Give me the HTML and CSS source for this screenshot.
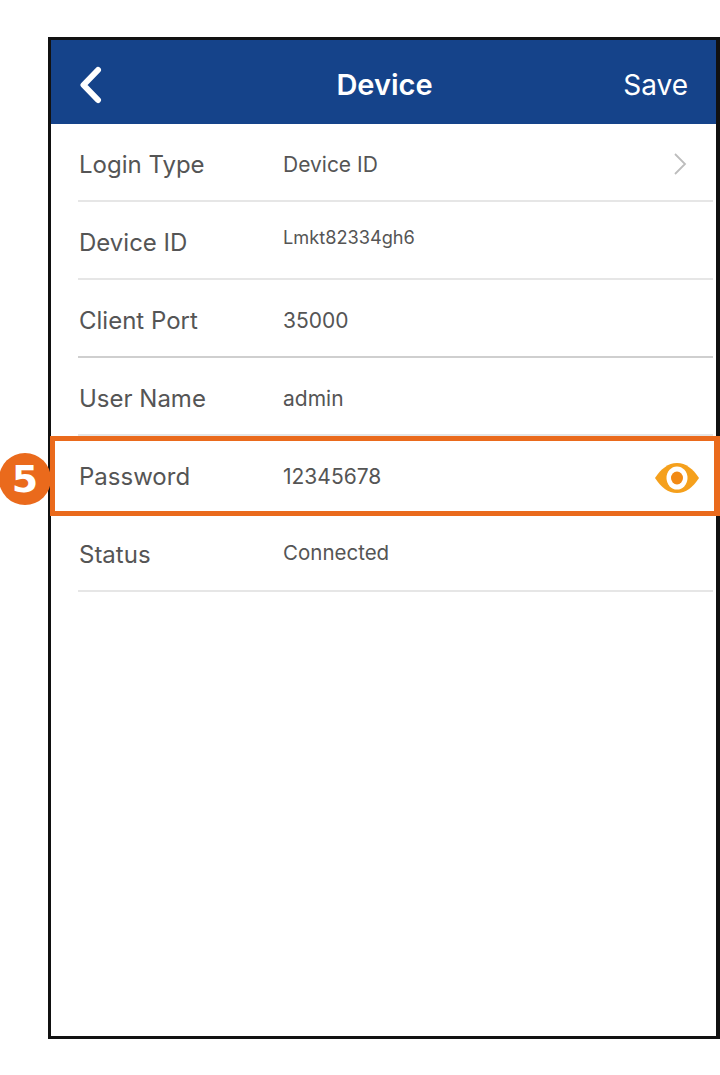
FILE: index.html
```html
<!DOCTYPE html>
<html lang="en">
<head>
    <meta charset="UTF-8">
    <title>Device</title>
    <link rel="stylesheet" href="styles.css">
</head>
<body>
<div class="phone">
    <div class="header">
        <svg class="back" width="24" height="38" viewBox="0 0 24 38">
            <path d="M20 4 L5.5 19 L20 34" fill="none" stroke="#fff" stroke-width="6" stroke-linecap="round" stroke-linejoin="round"/>
        </svg>
        <div class="title">Device</div>
        <div class="save">Save</div>
    </div>
    <div class="list">
        <div class="row">
            <span class="label">Login Type</span>
            <span class="value">Device ID</span>
            <svg class="chevron" width="14" height="24" viewBox="0 0 14 24">
                <path d="M2 2 L12 12 L2 22" fill="none" stroke="#bdbdbd" stroke-width="1.8"/>
            </svg>
        </div>
        <div class="row">
            <span class="label">Device ID</span>
            <span class="value small">Lmkt82334gh6</span>
        </div>
        <div class="row dark-line">
            <span class="label">Client Port</span>
            <span class="value">35000</span>
        </div>
        <div class="row">
            <span class="label">User Name</span>
            <span class="value">admin</span>
        </div>
        <div class="row highlight">
            <span class="label">Password</span>
            <span class="value">12345678</span>
            <svg class="eye" width="44" height="30" viewBox="0 0 44 30">
                <path d="M0 15 C6 6 13 0 22 0 C31 0 38 6 44 15 C38 24 31 30 22 30 C13 30 6 24 0 15 Z" fill="#f5a01c"/>
                <ellipse cx="22" cy="15" rx="10.5" ry="11.5" fill="#fff"/>
                <ellipse cx="22" cy="15" rx="6" ry="6.5" fill="#f28a14"/>
            </svg>
            <div class="badge">5</div>
        </div>
        <div class="row">
            <span class="label">Status</span>
            <span class="value status">Connected</span>
        </div>
    </div>
</div>
</body>
</html>
```

FILE: styles.css
```css
* {
    box-sizing: border-box;
}
body {
    margin: 0;
    background: #fff;
    font-family: "Inter", "Liberation Sans", sans-serif;
    padding: 37px 0 36px 48px;
}
.phone {
    width: 672px;
    height: 1002px;
    border: 3px solid #111;
    border-right-width: 4px;
    background: #fff;
}
.header {
    height: 84px;
    background: #15438a;
    color: #fff;
    display: flex;
    align-items: center;
    justify-content: space-between;
    padding: 5px 28px 0 27px;
    position: relative;
}
.title {
    position: absolute;
    left: 2px;
    right: 0;
    text-align: center;
    font-size: 29px;
    font-weight: 600;
}
.save {
    font-size: 28px;
}
.list {
    padding: 0 3px 0 27px;
}
.row {
    height: 78px;
    display: flex;
    align-items: center;
    border-bottom: 2px solid #e6e6e6;
    position: relative;
    padding: 4px 26px 0 0;
}
.dark-line {
    border-bottom-color: #cfcfcf;
}
.label {
    width: 205px;
    padding-left: 1px;
    font-size: 24px;
    color: #555;
}
.value {
    font-size: 21px;
    color: #555;
}
.small {
    font-size: 18.2px;
    position: relative;
    top: -5px;
}
.status {
    font-size: 20.5px;
    position: relative;
    top: -2px;
}
.chevron {
    margin-left: auto;
}
.highlight {
    border-bottom: none;
    padding: 2px 0 0;
}
.highlight::before {
    content: "";
    box-sizing: border-box;
    position: absolute;
    left: -28px;
    right: -7px;
    top: 0;
    height: 80px;
    border: 5px solid #ea6a1c;
    border-right-width: 6px;
}
.eye {
    position: absolute;
    right: 14px;
    top: 27px;
}
.badge {
    position: absolute;
    left: -79px;
    top: 17px;
    width: 52px;
    height: 52px;
    border-radius: 50%;
    background: #ea6a1c;
    color: #fff;
    font-family: "DejaVu Sans", sans-serif;
    font-weight: 700;
    font-size: 38px;
    line-height: 52px;
    text-align: center;
}
```
